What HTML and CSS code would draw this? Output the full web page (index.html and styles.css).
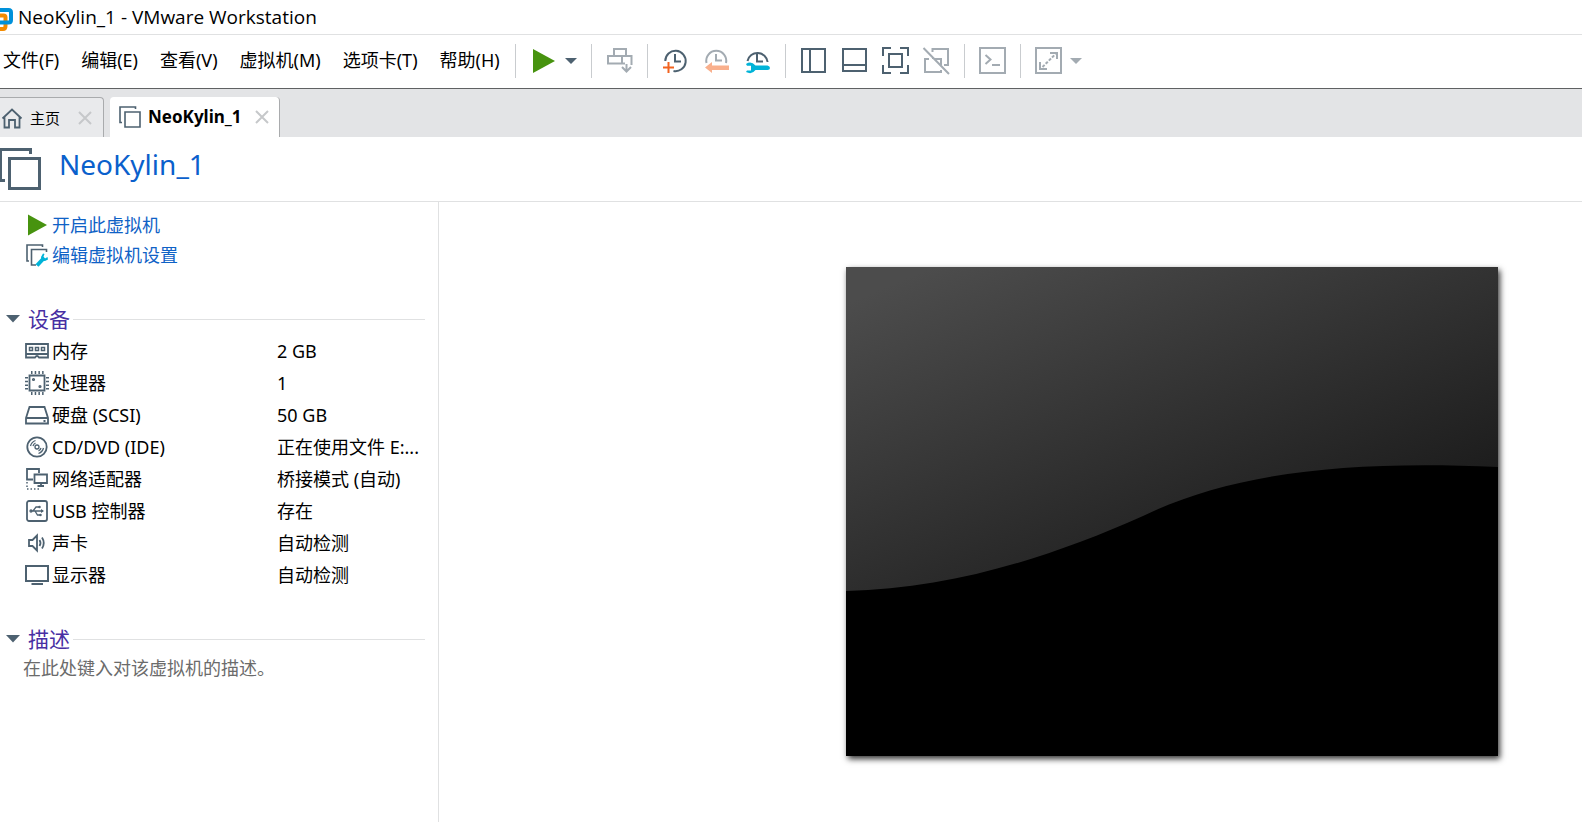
FILE: index.html
```html
<!DOCTYPE html>
<html lang="zh-CN">
<head>
    <meta charset="UTF-8">
    <meta name="viewport" content="width=device-width, initial-scale=1.0">
    <title>NeoKylin_1 - VMware Workstation</title>
    <link rel="stylesheet" href="styles.css">
</head>
<body>
    <div class="app">
        <div class="titlebar">
            <svg class="logo" width="14" height="28" viewBox="0 0 14 28" fill="none">
                <path d="M-4 12.500H3.500Q5.500 12.500 5.500 14.500V23Q5.500 26 3 26H-4" stroke="#f38b00" stroke-width="4"/>
                <path d="M-4 7H8.500Q11 7 11 9.500V17Q11 19.500 8.500 19.500H-4" stroke="#0091da" stroke-width="4"/>
            </svg>
            <span>NeoKylin_1 - VMware Workstation</span>
        </div>

        <div class="menubar">
            <nav class="menus">
                <button>文件(F)</button>
                <button>编辑(E)</button>
                <button>查看(V)</button>
                <button>虚拟机(M)</button>
                <button>选项卡(T)</button>
                <button>帮助(H)</button>
            </nav>
            <div class="tools">
                <div class="group">
                    <button class="tool" aria-label="开启">
                        <svg width="28" height="28" viewBox="0 0 28 28"><path d="M4 2L26 14L4 26z" fill="#47930f" stroke="none"/></svg>
                    </button>
                    <button class="caret" aria-label="电源选项">
                        <svg width="12" height="6" viewBox="0 0 12 6"><path d="M0 0H12L6 6z" fill="#4d6170"/></svg>
                    </button>
                </div>
                <div class="group">
                    <button class="tool gray" aria-label="发送 Ctrl+Alt+Del">
                        <svg width="28" height="28" viewBox="0 0 28 28">
                            <path d="M9 9V2H21V9M20 16.500H3V9H26.500V18M17 9V16.500M21.500 17V24M17 20L21.500 24.500L26 20"/>
                        </svg>
                    </button>
                </div>
                <div class="group">
                    <button class="tool" aria-label="拍摄快照">
                        <svg width="28" height="28" viewBox="0 0 28 28">
                            <path d="M4.300 14A10.200 10.200 0 1 1 12.500 24"/>
                            <path d="M14 7V14.500H20"/>
                            <path d="M7.500 15V26M2 20.500H13" stroke="#f2631f"/>
                        </svg>
                    </button>
                    <button class="tool gray" aria-label="恢复快照">
                        <svg width="28" height="28" viewBox="0 0 28 28">
                            <path d="M4.500 16A10 10 0 1 1 24 16"/>
                            <path d="M14 7V13.500H20"/>
                            <path d="M3 20.500L10 15V18.500H27V23H10V26z" fill="#f9b08d" stroke="none"/>
                        </svg>
                    </button>
                    <button class="tool" aria-label="管理快照">
                        <svg width="28" height="28" viewBox="0 0 28 28">
                            <path d="M4.500 14A10.200 10.200 0 0 1 24.600 15"/>
                            <path d="M14 7V14.500H20"/>
                            <path d="M3 17Q8 13.500 12.500 18.500H24.500Q27 19 27 21Q27 23 24.500 23H12.500Q9 28 3 25L4 23.500H8V18.700H4z" fill="#00b3d8" stroke="none"/>
                        </svg>
                    </button>
                </div>
                <div class="group">
                    <button class="tool" aria-label="显示库">
                        <svg width="28" height="28" viewBox="0 0 28 28"><path d="M3 2H26V25H3zM11 2V25"/></svg>
                    </button>
                    <button class="tool" aria-label="显示缩略图栏">
                        <svg width="28" height="28" viewBox="0 0 28 28"><path d="M3 2H26V24H3zM3 18H26"/></svg>
                    </button>
                    <button class="tool" aria-label="全屏">
                        <svg width="28" height="28" viewBox="0 0 28 28">
                            <path d="M2 9V1H10M19 1H27V9M27 18V26H19M10 26H2V18M8 7H21V20H8z"/>
                        </svg>
                    </button>
                    <button class="tool gray" aria-label="Unity 模式">
                        <svg width="28" height="28" viewBox="0 0 28 28">
                            <path d="M10.500 5V2H26V18H22M11 11V12M7 12H3V25H19V23M12 12H19V18M1.500 1L27 27"/>
                        </svg>
                    </button>
                </div>
                <div class="group">
                    <button class="tool gray" aria-label="控制台视图">
                        <svg width="28" height="28" viewBox="0 0 28 28"><path d="M2 1H27V26H2zM7.500 8L12.500 12.500L7.500 17M14 18H22"/></svg>
                    </button>
                </div>
                <div class="group">
                    <button class="tool gray" aria-label="自由拉伸">
                        <svg width="28" height="28" viewBox="0 0 28 28">
                            <path d="M2 1H27V26H2zM16 6H23V12M6 15V22H13"/>
                            <path d="M8.500 20L21.500 7" stroke-dasharray="3 1.500"/>
                        </svg>
                    </button>
                    <button class="caret" aria-label="拉伸选项">
                        <svg width="12" height="6" viewBox="0 0 12 6"><path d="M0 0H12L6 6z" fill="#a3abb2"/></svg>
                    </button>
                </div>
            </div>
        </div>

        <div class="tabs">
            <div class="tab home">
                <svg class="line" width="22" height="22" viewBox="0 0 22 22" stroke-width="1.800">
                    <path d="M1.500 11.500L11 2.500L20.500 11.500M3.500 10V20.500H8V13H14V20.500H18.500V10"/>
                </svg>
                <span>主页</span>
                <button class="close" aria-label="关闭">
                    <svg width="14" height="14" viewBox="0 0 14 14"><path d="M1 1L13 13M13 1L1 13"/></svg>
                </button>
            </div>
            <div class="tab active">
                <svg class="line" width="22" height="22" viewBox="0 0 22 22" stroke-width="1.600">
                    <path d="M3 16.500H1V1H16.500V3M6 6H21V21H6z"/>
                </svg>
                <span>NeoKylin_1</span>
                <button class="close" aria-label="关闭">
                    <svg width="14" height="14" viewBox="0 0 14 14"><path d="M1 1L13 13M13 1L1 13"/></svg>
                </button>
            </div>
        </div>

        <header class="vm-header">
            <svg class="line" width="42" height="44" viewBox="0 0 42 44" stroke-width="3">
                <path d="M5 33.500H0.500V2.500H30.500V7M9.500 11.500H39.500V41.500H9.500z"/>
            </svg>
            <h1>NeoKylin_1</h1>
        </header>

        <div class="content">
            <aside class="sidebar">
                <ul class="commands">
                    <li>
                        <svg width="24" height="24" viewBox="0 0 24 24"><path d="M3 1.500L22 12L3 22.500z" fill="#47930f"/></svg>
                        <a href="#">开启此虚拟机</a>
                    </li>
                    <li>
                        <svg class="line" width="24" height="24" viewBox="0 0 24 24" stroke-width="1.600">
                            <path d="M4 18H2V2H17.500V4M21.500 9V6.500H6.500V22H11"/>
                            <path d="M12 22.500L19 15" stroke="#00b3d8" stroke-width="4"/>
                            <path d="M18 10.500L16 14Q16 18 20 18L23 16.500L22.500 14L20 15.500L18.500 13.500L19.500 11z" fill="#00b3d8" stroke="none"/>
                        </svg>
                        <a href="#">编辑虚拟机设置</a>
                    </li>
                </ul>

                <section>
                    <h2>
                        <svg width="14" height="8" viewBox="0 0 14 8"><path d="M0 0H14L7 7.500z" fill="#4d6170"/></svg>
                        设备
                    </h2>
                    <table class="devices">
                        <tr>
                            <th scope="row"><div class="device">
                                <svg class="line" width="24" height="24" viewBox="0 0 24 24">
                                    <path d="M1 5H23V18.500H14Q12 15.500 10 18.500H1zM1 15H23"/>
                                    <path d="M4.500 8.500H7.500V11.500H4.500zM10.500 8.500H13.500V11.500H10.500zM16.500 8.500H19.500V11.500H16.500z" stroke-width="1.500"/>
                                </svg>内存</div></th>
                            <td>2 GB</td>
                        </tr>
                        <tr>
                            <th scope="row"><div class="device">
                                <svg class="line" width="24" height="24" viewBox="0 0 24 24">
                                    <path d="M4.500 4.500H19.500V19.500H4.500z"/>
                                    <path d="M6 1.500H19M6 22.500H19" stroke-width="3" stroke-dasharray="1.500 2.200"/>
                                    <path d="M1.500 6V19M22.500 6V19" stroke-width="3" stroke-dasharray="1.500 2.200"/>
                                    <circle cx="8.500" cy="8.500" r="0.700"/><circle cx="15" cy="15.500" r="0.700"/>
                                </svg>处理器</div></th>
                            <td>1</td>
                        </tr>
                        <tr>
                            <th scope="row"><div class="device">
                                <svg class="line" width="24" height="24" viewBox="0 0 24 24">
                                    <path d="M1 15L4.500 4H19.500L23 15V20.500H1zM1 15H23M18.500 18H20.500"/>
                                </svg>硬盘 (SCSI)</div></th>
                            <td>50 GB</td>
                        </tr>
                        <tr>
                            <th scope="row"><div class="device">
                                <svg class="line" width="24" height="24" viewBox="0 0 24 24">
                                    <circle cx="12" cy="12" r="9.700"/>
                                    <g stroke-width="1.300">
                                        <circle cx="12" cy="12" r="2"/>
                                        <path d="M5.500 11Q6.500 7 10.500 5.500M8 11Q8.500 9 10.500 8M18.500 13Q17.500 17 13.500 18.500M16 13Q15.500 15 13.500 16"/>
                                    </g>
                                </svg>CD/DVD (IDE)</div></th>
                            <td>正在使用文件 E:...</td>
                        </tr>
                        <tr>
                            <th scope="row"><div class="device">
                                <svg class="line" width="24" height="24" viewBox="0 0 24 24">
                                    <path d="M8 12.500H2V2H14V6M9.500 7.500H22V16H9.500zM16 16V19M12.500 19H19"/>
                                    <path d="M2 15V22H16" stroke-dasharray="1.500 2" stroke-width="1.500"/>
                                </svg>网络适配器</div></th>
                            <td>桥接模式 (自动)</td>
                        </tr>
                        <tr>
                            <th scope="row"><div class="device">
                                <svg class="line" width="24" height="24" viewBox="0 0 24 24">
                                    <rect x="2" y="2" width="20" height="20" rx="2"/>
                                    <path d="M6 12H18M8 12L11 8H14.500M10 12L12.500 16H15.500" stroke-width="1.300"/>
                                    <path d="M16 10L19 12L16 14z" fill="#4d6170" stroke="none"/>
                                    <g stroke-width="1.300">
                                        <circle cx="6" cy="12" r="1"/><circle cx="14.500" cy="8" r="0.600"/><circle cx="15.500" cy="16" r="0.600"/>
                                    </g>
                                </svg>USB 控制器</div></th>
                            <td>存在</td>
                        </tr>
                        <tr>
                            <th scope="row"><div class="device">
                                <svg class="line" width="24" height="24" viewBox="0 0 24 24">
                                    <path d="M4 9H7.500L12 4.500V19.500L7.500 15H4zM14.500 9Q16.500 12 14.500 15M17 6.500Q20.500 12 17 17.500"/>
                                </svg>声卡</div></th>
                            <td>自动检测</td>
                        </tr>
                        <tr>
                            <th scope="row"><div class="device">
                                <svg class="line" width="24" height="24" viewBox="0 0 24 24">
                                    <path d="M1 3H23V18H1zM6.500 21H18" stroke-width="2"/>
                                </svg>显示器</div></th>
                            <td>自动检测</td>
                        </tr>
                    </table>
                </section>

                <section>
                    <h2>
                        <svg width="14" height="8" viewBox="0 0 14 8"><path d="M0 0H14L7 7.500z" fill="#4d6170"/></svg>
                        描述
                    </h2>
                    <p class="description">在此处键入对该虚拟机的描述。</p>
                </section>
            </aside>

            <main class="console">
                <svg class="screen" viewBox="0 0 652 489">
                    <defs>
                        <linearGradient id="glass" gradientUnits="userSpaceOnUse" x1="40" y1="20" x2="208" y2="416">
                            <stop offset="0" stop-color="#4c4c4c"/>
                            <stop offset="1" stop-color="#1a1a1a"/>
                        </linearGradient>
                    </defs>
                    <rect width="652" height="489" fill="#000"/>
                    <path d="M0 0H652V200C500 193 385 206 297 249C205 290 105 322 0 324z" fill="url(#glass)"/>
                </svg>
            </main>
        </div>
    </div>
</body>
</html>
```
FILE: styles.css
```css
* {
    box-sizing: border-box;
}
body {
    margin: 0;
    background: #fff;
    color: #000;
    font-family: "Noto Sans", "Noto Sans CJK SC", sans-serif;
    font-size: 18px;
    line-height: 24px;
}
button {
    padding: 0;
    border: none;
    background: none;
    color: inherit;
    font: inherit;
    cursor: pointer;
}
svg {
    display: block;
    flex: none;
}
h1, h2, p, ul {
    margin: 0;
    padding: 0;
    font-weight: normal;
}
a {
    color: #0f62c6;
    text-decoration: none;
}
.line {
    fill: none;
    stroke: #4d6170;
}
.app {
    display: flex;
    flex-direction: column;
    min-height: 100vh;
}

/* title and menus */
.titlebar {
    display: flex;
    align-items: center;
    gap: 4px;
    height: 35px;
    border-bottom: 1px solid #e0e1e2;
    font-family: "Open Sans", sans-serif;
    font-size: 19px;
}
.menubar {
    display: flex;
    align-items: center;
    height: 54px;
    padding-bottom: 2px;
    border-bottom: 1px solid #5f6163;
    white-space: nowrap;
}
.menus {
    display: flex;
    gap: 22px;
    width: 515px;
    padding: 0 0 2px 3px;
}
.tools {
    display: flex;
}
.group {
    display: flex;
    align-items: center;
    gap: 13px;
    height: 34px;
    padding: 0 14px 0 13px;
    border-left: 1px solid #c9cccf;
}
.tool svg {
    fill: none;
    stroke: #4d6170;
    stroke-width: 2;
}
.tool.gray svg {
    stroke: #a3abb2;
}
.caret {
    margin-left: -5px;
}

/* tabs */
.tabs {
    display: flex;
    align-items: flex-end;
    gap: 6px;
    height: 48px;
    background: #e3e4e6;
}
.tab {
    display: flex;
    align-items: center;
    height: 40px;
    border-right: 1px solid #a9abad;
    border-top-right-radius: 4px;
}
.tab.home {
    gap: 7px;
    width: 104px;
    padding: 0 11px 0 1px;
    border-top: 1px solid #a9abad;
    background: #e9eaec;
    font-size: 15px;
}
.tab.active {
    gap: 7px;
    width: 170px;
    padding: 0 10px 0 9px;
    border-top-left-radius: 4px;
    background: #fff;
    font-size: 17px;
    font-weight: bold;
}
.close {
    margin-left: auto;
}
.close svg {
    fill: none;
    stroke: #c6c8ca;
    stroke-width: 2;
}

/* vm page */
.vm-header {
    display: flex;
    align-items: center;
    gap: 17px;
    height: 65px;
    border-bottom: 1px solid #e0e1e2;
}
.vm-header h1 {
    padding-bottom: 10px;
    color: #0a60cc;
    font-size: 28px;
    line-height: 36px;
}
.content {
    display: flex;
    flex: 1;
}
.sidebar {
    flex: none;
    width: 439px;
    padding: 8px 13px 0 0;
    border-right: 1px solid #e0e1e2;
}
.commands {
    margin-bottom: 33px;
    padding-left: 25px;
    list-style: none;
}
.commands li {
    display: flex;
    align-items: center;
    gap: 3px;
    height: 30px;
}
section {
    margin-bottom: 32px;
}
h2 {
    display: flex;
    align-items: center;
    gap: 8px;
    height: 32px;
    padding-left: 6px;
    color: #482fa3;
    font-size: 21px;
}
h2::after {
    content: "";
    flex: 1;
    margin-left: -5px;
    border-top: 1px solid #e0e1e2;
}
.devices {
    width: 100%;
    border-collapse: collapse;
    table-layout: fixed;
}
.devices th, .devices td {
    height: 32px;
    padding: 0;
    font-weight: normal;
    text-align: left;
    white-space: nowrap;
}
.devices th {
    width: 277px;
    padding-left: 25px;
}
.device {
    display: flex;
    align-items: center;
    gap: 3px;
}
.device svg {
    stroke-width: 1.8;
}
.description {
    padding: 1px 0 0 23px;
    color: #6b6b6b;
}
.console {
    flex: 1;
    padding: 65px 84px 65px 0;
}
.screen {
    width: 62%;
    max-width: 652px;
    margin-left: auto;
    box-shadow: 2px 3px 6px rgba(0, 0, 0, 0.8);
}
```
